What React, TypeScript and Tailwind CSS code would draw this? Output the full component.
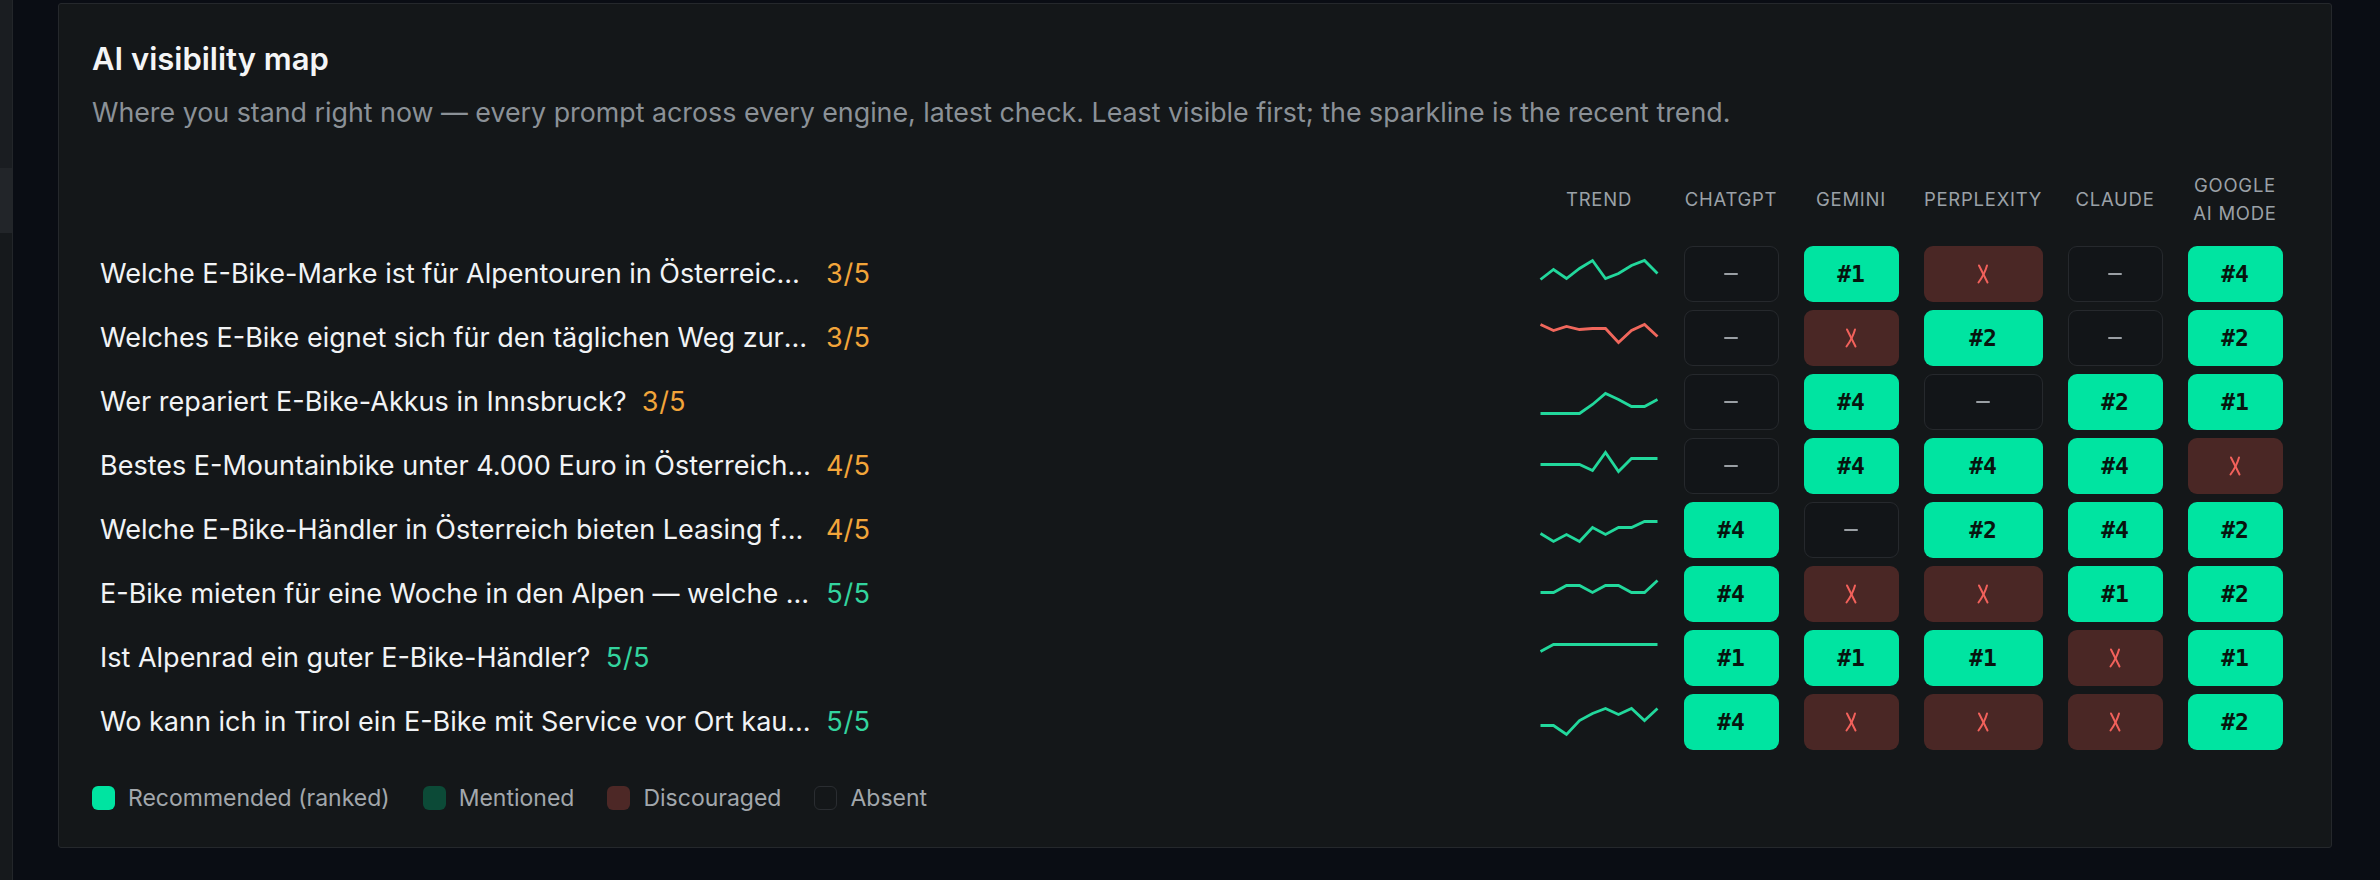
import React from "react";

type Cell = "abs" | "dis" | number;

const engines = [
  { name: "ChatGPT", col: "w-[95px]" },
  { name: "Gemini", col: "w-[95px]" },
  { name: "Perplexity", col: "w-[119px]" },
  { name: "Claude", col: "w-[95px]" },
  { name: "Google AI Mode", col: "w-[95px]" },
];

const rows: { prompt: string; score: number; trend: number[]; down?: boolean; cells: Cell[] }[] = [
  {
    prompt: "Welche E-Bike-Marke ist für Alpentouren in Österreich am besten geeignet?",
    score: 3,
    trend: [20, 10, 19, 9, 1, 19, 14, 6, 1, 14],
    cells: ["abs", 1, "dis", "abs", 4],
  },
  {
    prompt: "Welches E-Bike eignet sich für den täglichen Weg zur Arbeit in Wien?",
    score: 3,
    trend: [1, 7, 3, 6, 5, 5, 19, 7, 1, 13],
    down: true,
    cells: ["abs", "dis", 2, "abs", 2],
  },
  {
    prompt: "Wer repariert E-Bike-Akkus in Innsbruck?",
    score: 3,
    trend: [26, 26, 26, 26, 17, 6, 12, 19, 19, 12],
    cells: ["abs", 4, "abs", 2, 1],
  },
  {
    prompt: "Bestes E-Mountainbike unter 4.000 Euro in Österreich kaufen?",
    score: 4,
    trend: [13, 13, 13, 13, 19, 1, 20, 7, 7, 7],
    cells: ["abs", 4, 4, 4, "dis"],
  },
  {
    prompt: "Welche E-Bike-Händler in Österreich bieten Leasing für Firmen an?",
    score: 4,
    trend: [18, 26, 19, 26, 12, 19, 12, 12, 6, 6],
    cells: [4, "abs", 2, 4, 2],
  },
  {
    prompt: "E-Bike mieten für eine Woche in den Alpen — welche Anbieter gibt es?",
    score: 5,
    trend: [13, 13, 6, 6, 13, 6, 6, 13, 13, 1],
    cells: [4, "dis", "dis", 1, 2],
  },
  {
    prompt: "Ist Alpenrad ein guter E-Bike-Händler?",
    score: 5,
    trend: [8, 1, 1, 1, 1, 1, 1, 1, 1, 1],
    cells: [1, 1, 1, "dis", 1],
  },
  {
    prompt: "Wo kann ich in Tirol ein E-Bike mit Service vor Ort kaufen?",
    score: 5,
    trend: [18, 18, 27, 13, 6, 1, 7, 1, 13, 1],
    cells: [4, "dis", "dis", "dis", 2],
  },
];

const gridCols = "grid grid-cols-[1fr_144px_120px_120px_144px_120px_120px]";

function Sparkline({ values, down }: { values: number[]; down?: boolean }) {
  const step = 117 / (values.length - 1);
  const pts = values.map((v, i) => `${(1.5 + i * step).toFixed(1)},${v + 2.5}`).join(" ");
  return (
    <svg width="120" height="34" viewBox="0 0 120 34" fill="none">
      <polyline
        points={pts}
        stroke={down ? "#f0675c" : "#22d89c"}
        strokeWidth="2.8"
        strokeLinejoin="miter"
        strokeLinecap="butt"
      />
    </svg>
  );
}

function Cross() {
  return (
    <svg width="14" height="20" viewBox="0 0 14 20" fill="none" stroke="#f2615b" strokeWidth="2" strokeLinecap="round">
      <path d="M3 1.5 L11.5 18.5" />
      <path d="M11 1.5 C9.5 7 6.5 13 2.5 18.5" />
    </svg>
  );
}

function EngineCell({ value, col }: { value: Cell; col: string }) {
  if (value === "abs") {
    return (
      <div
        className={`${col} flex h-[56px] items-center justify-center rounded-[9px] border-[1.5px] border-[#26292d] bg-[#121518]`}
      >
        <span className="h-[2px] w-[14px] rounded-full bg-[#9a9fa4]" />
      </div>
    );
  }
  if (value === "dis") {
    return (
      <div className={`${col} flex h-[56px] items-center justify-center rounded-[9px] bg-[#4a2725]`}>
        <Cross />
      </div>
    );
  }
  return (
    <div
      className={`${col} flex h-[56px] items-center justify-center rounded-[9px] bg-[#00e4a1] font-['DejaVu_Sans_Mono',monospace] text-[23px] font-bold text-[#07150f]`}
    >
      #{value}
    </div>
  );
}

const legend = [
  { label: "Recommended (ranked)", swatch: "bg-[#00e4a1]" },
  { label: "Mentioned", swatch: "bg-[#0c4a37]" },
  { label: "Discouraged", swatch: "bg-[#4d2826]" },
  { label: "Absent", swatch: "border-[1.5px] border-[#2a2d31]" },
];

export default function App() {
  return (
    <div className="flex h-[880px] w-[2380px] overflow-hidden bg-[#0a0d14] font-['Inter',sans-serif]">
      {/* sidebar edge */}
      <aside className="flex w-[13px] shrink-0 flex-col border-r border-[#23262a] bg-[#1a1d21]">
        <div className="h-[168px]" />
        <div className="h-[65px] bg-[#222529]" />
        <div className="flex-1 bg-[#16191c]" />
      </aside>

      <main className="flex-1 pt-[3px] pl-[45px] pr-[48px]">
        <section className="rounded-[3px] border border-[#25282c] bg-[#141719] pt-[36px] pb-[37px] pl-[33px] pr-[36px]">
          <h2 className="text-[31px] leading-[38px] font-semibold text-[#f4f5f6]">AI visibility map</h2>
          <p className="mt-[18px] text-[26.8px] leading-[32px] text-[#8b9197]">
            Where you stand right now — every prompt across every engine, latest check. Least visible first; the
            sparkline is the recent trend.
          </p>

          {/* header */}
          <div className={`${gridCols} mt-[43px] mb-[19px] h-[56px] items-center text-center text-[18.5px] leading-[28px] tracking-[0.04em] text-[#9ba1a7] uppercase`}>
            <div />
            <div>Trend</div>
            <div>ChatGPT</div>
            <div>Gemini</div>
            <div>Perplexity</div>
            <div>Claude</div>
            <div>
              Google
              <br />
              AI Mode
            </div>
          </div>

          {/* rows */}
          <div className="flex flex-col gap-y-[8px]">
            {rows.map((row) => (
              <div key={row.prompt} className={`${gridCols} h-[56px] items-center`}>
                <div className="flex min-w-0 items-center gap-[15px] pl-[8px] text-[27px] leading-[36px]">
                  <span className="max-w-[711px] truncate text-[#f1f3f5]">{row.prompt}</span>
                  <span
                    className={`shrink-0 tabular-nums ${row.score >= 5 ? "text-[#33d49e]" : "text-[#f2a53a]"}`}
                  >
                    {row.score}/5
                  </span>
                </div>
                <div className="flex justify-center">
                  <Sparkline values={row.trend} down={row.down} />
                </div>
                {row.cells.map((c, i) => (
                  <div key={i} className="flex justify-center">
                    <EngineCell value={c} col={engines[i].col} />
                  </div>
                ))}
              </div>
            ))}
          </div>

          {/* legend */}
          <div className="mt-[36px] flex items-center gap-[33px] text-[23px] leading-[24px] text-[#a2a7ac]">
            {legend.map((l) => (
              <div key={l.label} className="flex items-center gap-[13px]">
                <span className={`h-[24px] w-[23px] rounded-[6px] ${l.swatch}`} />
                <span>{l.label}</span>
              </div>
            ))}
          </div>
        </section>
      </main>
    </div>
  );
}
